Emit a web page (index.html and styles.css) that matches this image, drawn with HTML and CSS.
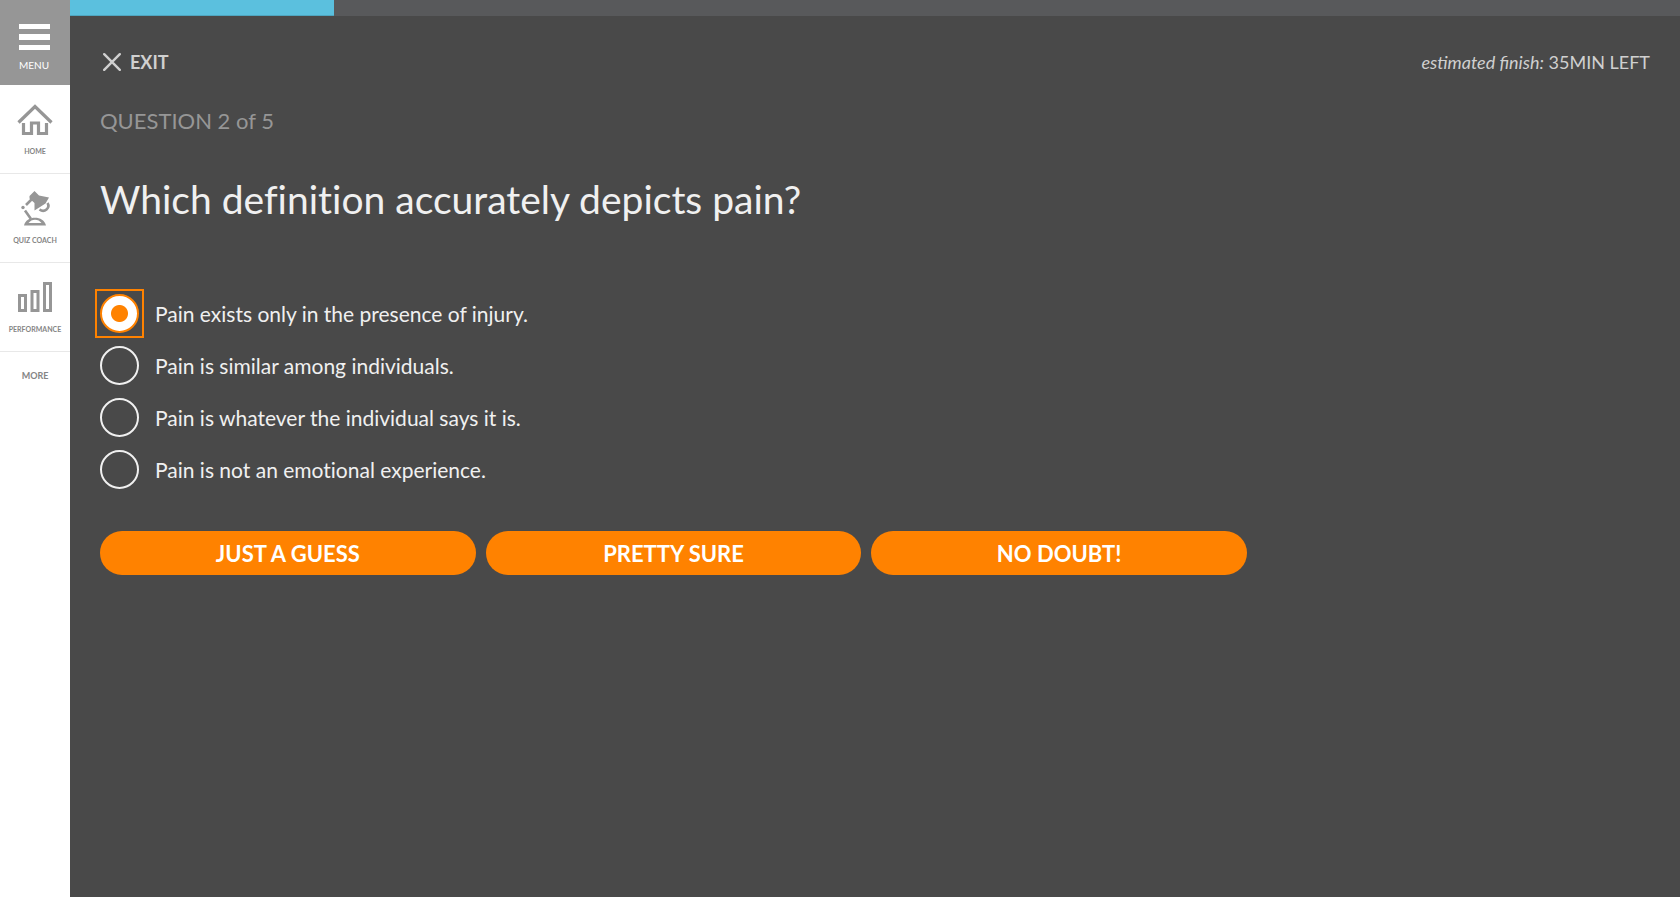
FILE: index.html
```html
<!DOCTYPE html>
<html lang="en">
<head>
<meta charset="utf-8">
<title>Quiz</title>
<link rel="stylesheet" href="styles.css">
</head>
<body>
<div class="app">
  <nav class="sidebar" aria-label="Main">
    <button class="menu" type="button">
      <svg class="menu-icon" width="31" height="27" viewBox="0 0 31 27" fill="#fff"><path d="M0 0h31v5H0zM0 10h31v6H0zM0 21h31v5H0z"/></svg>
      <span>MENU</span>
    </button>
    <a class="nav-item" href="#home">
      <svg width="36" height="36" viewBox="0 0 36 36" fill="none" stroke="#969696" stroke-width="3.200"><path d="M1.500 20.500 18 4.500 34.500 20.500" stroke-width="3.200"/><path d="M6.500 21v10.500h8V21h7v10.500h8V21"/></svg>
      <span>HOME</span>
    </a>
    <a class="nav-item" href="#coach">
      <svg width="36" height="36" viewBox="0 0 36 36" fill="#969696"><path d="M12.500 5 17.500 0 22 4.500 32 6.500 28.500 12.500 17.500 19.500V12L12.500 7.500z"/><circle cx="6" cy="16.500" r="1.700"/><path d="M14.500 8.500 9 14M8 19.500 14 28" fill="none" stroke="#969696" stroke-width="2.600"/><path d="M30.500 12C33.500 17 27.500 22 22.500 18.500" fill="none" stroke="#969696" stroke-width="2.600"/><path fill-rule="evenodd" d="M7 34.500C9 24 27 24 29 34.500zM11.500 32h13c-3-4.500-10-4.500-13 0z"/></svg>
      <span>QUIZ COACH</span>
    </a>
    <a class="nav-item" href="#performance">
      <svg width="36" height="36" viewBox="0 0 36 36" fill="none" stroke="#969696" stroke-width="3"><path d="M2.500 15.500h6v15h-6zM15 11.500h6v19h-6zM27.500 3.500h6v27h-6z"/></svg>
      <span>PERFORMANCE</span>
    </a>
    <a class="more" href="#more">MORE</a>
  </nav>
  <main class="main">
    <div class="progress"><div class="progress-fill" style="width:16.400%"></div></div>
    <div class="content">
      <header class="topbar">
        <button class="exit" type="button">
          <svg width="18" height="18" viewBox="0 0 18 18" fill="none" stroke="#d0d0d0" stroke-width="2.400" stroke-linecap="round"><path d="M1.200 1.200 16.800 16.800M16.800 1.200 1.200 16.800"/></svg>
          <span>EXIT</span>
        </button>
        <p class="estimate"><em>estimated finish:</em> 35MIN LEFT</p>
      </header>
      <p class="counter">QUESTION 2 of 5</p>
      <h1 class="question">Which definition accurately depicts pain?</h1>
      <form class="quiz">
        <div class="options">
          <label class="option"><span class="mark"><input class="radio" type="radio" name="answer" checked></span><span>Pain exists only in the presence of injury.</span></label>
          <label class="option"><span class="mark"><input class="radio" type="radio" name="answer"></span><span>Pain is similar among individuals.</span></label>
          <label class="option"><span class="mark"><input class="radio" type="radio" name="answer"></span><span>Pain is whatever the individual says it is.</span></label>
          <label class="option"><span class="mark"><input class="radio" type="radio" name="answer"></span><span>Pain is not an emotional experience.</span></label>
        </div>
        <div class="actions">
          <button class="confidence" type="button">JUST A GUESS</button>
          <button class="confidence" type="button">PRETTY SURE</button>
          <button class="confidence" type="button">NO DOUBT!</button>
        </div>
      </form>
    </div>
  </main>
</div>
</body>
</html>
```
FILE: styles.css
```css
* { box-sizing: border-box; }
body {
  margin: 0;
  font-family: Lato, "Open Sans", sans-serif;
  color: #f0f0f0;
  background: #494949;
}
button { font-family: inherit; border: 0; cursor: pointer; }
a { text-decoration: none; }
svg { display: block; }
h1, p { margin: 0; }

.app { display: flex; min-height: 100vh; }

.sidebar {
  flex: 0 0 70px;
  display: flex;
  flex-direction: column;
  background: #fff;
}
.menu {
  display: flex;
  flex-direction: column;
  align-items: center;
  gap: 8px;
  height: 85px;
  padding: 24px 2px 0 0;
  background: #969696;
  color: #fff;
  font-size: 10px;
  line-height: 12px;
}
.nav-item {
  display: flex;
  flex-direction: column;
  align-items: center;
  gap: 8px;
  height: 89px;
  padding-top: 17px;
  border-bottom: 1px solid #e8e8e8;
  color: #858585;
  font-size: 7px;
  font-weight: 700;
  line-height: 10px;
}
.more {
  padding-top: 17px;
  color: #858585;
  font-size: 9px;
  font-weight: 700;
  line-height: 14px;
  text-align: center;
}

.main { flex: 1; min-width: 0; }
.progress { height: 16px; background: #58595b; }
.progress-fill {
  height: 100%;
  background: #5bc0de;
  border-bottom: 1px solid #4fa6c0;
}
.content { padding: 32px 30px; }

.topbar {
  display: flex;
  justify-content: space-between;
  align-items: center;
  height: 28px;
}
.exit {
  display: flex;
  align-items: center;
  gap: 9px;
  padding: 0 3px;
  background: none;
  color: #d0d0d0;
  font-size: 18px;
  font-weight: 700;
  line-height: 28px;
}
.estimate { color: #d0d0d0; font-size: 18px; line-height: 26px; }

.counter {
  margin-top: 29px;
  color: #969696;
  font-size: 22px;
  line-height: 32px;
}
.question {
  margin-top: 36px;
  font-size: 39px;
  font-weight: 400;
  line-height: 52px;
  font-variant-ligatures: none;
}

.options {
  display: flex;
  flex-direction: column;
  gap: 13px;
  margin-top: 69px;
}
.option {
  display: flex;
  align-items: center;
  gap: 16px;
  font-size: 21px;
  line-height: 39px;
  font-variant-ligatures: none;
}
.mark { display: flex; flex: none; }
.mark:has(:checked) {
  outline: 2px solid #ff8200;
  outline-offset: 3px;
}
.radio {
  appearance: none;
  width: 39px;
  height: 39px;
  margin: 0;
  border: 2px solid #f0f0f0;
  border-radius: 50%;
  outline: none;
}
.radio:checked {
  border-color: #ff8200;
  background: radial-gradient(circle, #ff8200 8px, #fff 9px);
  background-origin: border-box;
}

.actions {
  display: grid;
  grid-template-columns: repeat(3, 1fr);
  gap: 10px;
  width: 74%;
  margin-top: 42px;
}
.confidence {
  height: 44px;
  padding: 0 16px;
  border-radius: 22px;
  background: #ff8200;
  color: #fff;
  font-size: 22px;
  font-weight: 700;
}
```
